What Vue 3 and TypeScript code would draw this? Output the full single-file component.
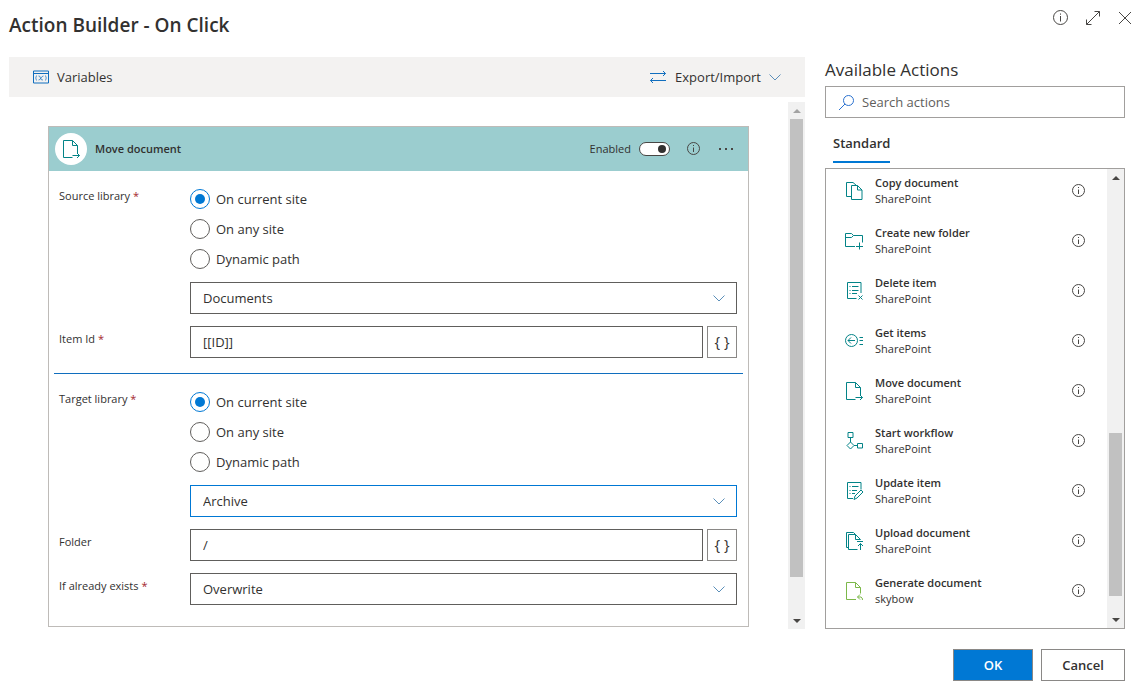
<script setup lang="ts">
import { ref } from 'vue'

interface Action {
  name: string
  source: string
  icon: string
  tone?: 'green'
}

const docPath = 'M11.5 18.5h-9v-17h9l5 5v7.5M11.5 1.5v5h5'
const listPath =
  'M12.5 17.5h-9v-16h13.5v10.5M8 5.5h6.5M8 9.5h6.5M8 12.5h5M5.5 5.5h1M5.5 9.5h1M5.5 12.5h1'

const actions: Action[] = [
  {
    name: 'Copy document',
    source: 'SharePoint',
    icon: 'M7 15.5h-4.500v-14h6.500l3.500 3M7.500 4.500h6l4.500 4.500v9.500h-10.500zM13.500 4.500v4.500h4.500',
  },
  {
    name: 'Create new folder',
    source: 'SharePoint',
    icon: 'M11 15.5h-9.500v-13h6l2 2h9v7M1.500 6.500h6l2-2M15.500 11.500v7M12 15.500h7',
  },
  { name: 'Delete item', source: 'SharePoint', icon: listPath + 'M14.500 14.500l4 4M18.500 14.500l-4 4' },
  {
    name: 'Get items',
    source: 'SharePoint',
    icon: 'M13.500 9.500a6 6 0 1 1-12 0a6 6 0 1 1 12 0zM4 9.500h7M7 6.500l-3 3l3 3M15.500 6.500h3.500M15.500 9.500h3.500M15.500 13.500h3.500',
  },
  { name: 'Move document', source: 'SharePoint', icon: docPath + 'M11.500 16.500h7M16 14l2.500 2.500l-2.500 2.500' },
  {
    name: 'Start workflow',
    source: 'SharePoint',
    icon: 'M4 1.500h5v5h-5zM6.500 6.500v4.500M6.500 11l3.500 3.500l-3.500 3.500l-3.500-3.500zM10 14.500h3.500M13.500 12.500h5v4.500h-5z',
  },
  {
    name: 'Update item',
    source: 'SharePoint',
    icon: 'M9 17.500h-5.500v-16h13.500v7M8 5.500h6.500M8 9.500h5M8 12.500h3M5.500 5.500h1M5.500 9.500h1M5.500 12.500h1M10 18.500l1-3.500l6-6l2 2l-6 6z',
  },
  {
    name: 'Upload document',
    source: 'SharePoint',
    icon: 'M4.500 16.500h-2v-15h7l2 2M13.500 18.500h-9v-15h7l5 5M11.500 3.500v5h5M13 10.500h6M16.500 19v-6.500M14 15l2.500-2.500l2.500 2.500',
  },
  {
    name: 'Generate document',
    source: 'skybow',
    icon: 'M12 18.500h-9.500v-17h9l5 5v6M11.500 1.500v5h5M16 13.500l-2.500 2.500l2.500 2.500M13.500 16h3.500q1.500 .500 1.500 3',
    tone: 'green',
  },
]

const locations = ['On current site', 'On any site', 'Dynamic path']
const sourceLocation = ref(locations[0])
const targetLocation = ref(locations[0])
const sourceLibrary = ref('Documents')
const targetLibrary = ref('Archive')
const itemId = ref('[[ID]]')
const folder = ref('/')
const ifExists = ref('Overwrite')
const enabled = ref(true)
const search = ref('')
</script>

<template>
  <main class="dialog">
    <header class="title-bar">
      <h1>Action Builder - On Click</h1>
      <div class="window-buttons">
        <button type="button" aria-label="Information">
          <svg width="16" height="16" viewBox="0 0 16 16"><circle cx="7.500" cy="7.500" r="7" /><path d="M7.500 6v5.500M7.500 3.500v1.200" /></svg>
        </button>
        <button type="button" aria-label="Expand">
          <svg width="16" height="16" viewBox="0 0 16 16"><path d="M1.500 14.500l13-13M9.500 1.500h5v5M1.500 9.500v5h5" /></svg>
        </button>
        <button type="button" aria-label="Close">
          <svg width="16" height="16" viewBox="0 0 16 16"><path d="M2 2l12 12M14 2l-12 12" /></svg>
        </button>
      </div>
    </header>

    <div class="columns">
      <section class="builder">
        <div class="command-bar">
          <button type="button">
            <svg class="blue" width="16" height="14" viewBox="0 0 16 14">
              <path d="M.5 1h15v12h-15zM.5 3.500h15" />
              <path class="fine" d="M3.500 5.500q-1.500 2.500 0 5M12.500 5.500q1.500 2.500 0 5M5.500 6q1.500-.5 2 2t2.500 2M10.500 6q-1.500 0-2.500 2t-2.500 2" />
            </svg>
            Variables
          </button>
          <button type="button">
            <svg class="blue" width="17" height="12" viewBox="0 0 17 12"><path d="M0 2.500h15.500M13 0l2.500 2.500l-2.500 2.500M16 9.500h-15.500M3 7l-2.500 2.500l2.500 2.500" /></svg>
            Export/Import
            <svg class="chevron" width="12" height="7" viewBox="0 0 12 7"><path d="M.5 .5l5.500 5.500l5.500-5.500" /></svg>
          </button>
        </div>

        <div class="canvas">
          <form class="card" @submit.prevent>
            <div class="card-header">
              <span class="badge">
                <svg class="teal" width="20" height="20" viewBox="0 0 20 20"><path :d="actions[4].icon" /></svg>
              </span>
              <h2>Move document</h2>
              <label class="enabled">Enabled <input v-model="enabled" type="checkbox" role="switch" /></label>
              <button type="button" class="plain info" aria-label="About this action">
                <svg width="14" height="14" viewBox="0 0 14 14"><circle cx="6.500" cy="6.500" r="6" /><path d="M6.500 5.500v4.500M6.500 3v1" /></svg>
              </button>
              <button type="button" class="plain more" aria-label="More options">
                <svg width="16" height="4" viewBox="0 0 16 4"><path class="dots" d="M1 1h2v2h-2zM7 1h2v2h-2zM13 1h2v2h-2z" /></svg>
              </button>
            </div>

            <div class="group">
              <div class="row">
                <span id="source-label" class="label first">Source library <i>*</i></span>
                <div class="control">
                  <div class="radios" role="radiogroup" aria-labelledby="source-label">
                    <label v-for="item in locations" :key="item">
                      <input v-model="sourceLocation" type="radio" name="source" :value="item" />{{ item }}
                    </label>
                  </div>
                  <div class="select">
                    <select v-model="sourceLibrary" aria-labelledby="source-label"><option>Documents</option></select>
                    <svg class="chevron" width="12" height="7" viewBox="0 0 12 7"><path d="M.5 .5l5.500 5.500l5.500-5.500" /></svg>
                  </div>
                </div>
              </div>
              <div class="row">
                <label class="label" for="item-id">Item Id <i>*</i></label>
                <div class="control with-button">
                  <input id="item-id" v-model="itemId" type="text" />
                  <button type="button" class="braces" aria-label="Insert expression for Item Id">{ }</button>
                </div>
              </div>
            </div>
            <hr />
            <div class="group">
              <div class="row">
                <span id="target-label" class="label first">Target library <i>*</i></span>
                <div class="control">
                  <div class="radios" role="radiogroup" aria-labelledby="target-label">
                    <label v-for="item in locations" :key="item">
                      <input v-model="targetLocation" type="radio" name="target" :value="item" />{{ item }}
                    </label>
                  </div>
                  <div class="select active">
                    <select v-model="targetLibrary" aria-labelledby="target-label"><option>Archive</option></select>
                    <svg class="chevron" width="12" height="7" viewBox="0 0 12 7"><path d="M.5 .5l5.500 5.500l5.500-5.500" /></svg>
                  </div>
                </div>
              </div>
              <div class="row">
                <label class="label" for="folder">Folder</label>
                <div class="control with-button">
                  <input id="folder" v-model="folder" type="text" />
                  <button type="button" class="braces" aria-label="Insert expression for Folder">{ }</button>
                </div>
              </div>
              <div class="row">
                <label class="label" for="exists">If already exists <i>*</i></label>
                <div class="control">
                  <div class="select">
                    <select id="exists" v-model="ifExists"><option>Overwrite</option></select>
                    <svg class="chevron" width="12" height="7" viewBox="0 0 12 7"><path d="M.5 .5l5.500 5.500l5.500-5.500" /></svg>
                  </div>
                </div>
              </div>
            </div>
          </form>
          <div class="scrollbar form-scroll" aria-hidden="true">
            <span class="arrow up muted"></span>
            <div class="track"><span class="before"></span><span class="thumb"></span><span class="after"></span></div>
            <span class="arrow down"></span>
          </div>
        </div>
      </section>

      <aside class="library">
        <h2>Available Actions</h2>
        <label class="search">
          <svg width="17" height="17" viewBox="0 0 17 17"><circle cx="10.500" cy="6.500" r="5" /><path d="M7 10l-6 6" /></svg>
          <input v-model="search" type="search" placeholder="Search actions" aria-label="Search actions" />
        </label>
        <div class="tabs" role="tablist">
          <button type="button" role="tab" aria-selected="true">Standard</button>
        </div>
        <div class="list-box">
          <ul>
            <li v-for="action in actions" :key="action.name">
              <svg :class="action.tone ?? 'teal'" width="20" height="20" viewBox="0 0 20 20"><path :d="action.icon" /></svg>
              <div class="text"><strong>{{ action.name }}</strong><span>{{ action.source }}</span></div>
              <button type="button" class="plain" :aria-label="'About ' + action.name">
                <svg width="14" height="14" viewBox="0 0 14 14"><circle cx="6.500" cy="6.500" r="6" /><path d="M6.500 5.500v4.500M6.500 3v1" /></svg>
              </button>
            </li>
          </ul>
          <div class="scrollbar list-scroll" aria-hidden="true">
            <span class="arrow up"></span>
            <div class="track"><span class="before"></span><span class="thumb"></span><span class="after"></span></div>
            <span class="arrow down"></span>
          </div>
        </div>
      </aside>
    </div>

    <footer>
      <button type="button" class="primary">OK</button>
      <button type="button">Cancel</button>
    </footer>
  </main>
</template>

<style>
body {
  margin: 0;
  background: #fff;
}
</style>

<style scoped>
* {
  box-sizing: border-box;
}
.dialog {
  display: flex;
  flex-direction: column;
  min-height: 100vh;
  padding: 0 15px 9px 9px;
  font: 13px/20px "Segoe UI", "Open Sans", sans-serif;
  color: #323130;
}
button,
input,
select {
  font: inherit;
  color: inherit;
}
button {
  padding: 0;
  border: 0;
  background: none;
}
h1,
h2,
ul {
  margin: 0;
  padding: 0;
}
svg {
  display: block;
  flex: none;
  fill: none;
  stroke: #484644;
}
.title-bar {
  display: flex;
  justify-content: space-between;
  height: 57px;
}
h1 {
  padding-top: 11px;
  font-size: 19px;
  font-weight: 600;
  line-height: 28px;
}
.window-buttons {
  display: flex;
  gap: 16px;
  height: 16px;
  margin: 10px -8px 0 0;
}
.columns {
  display: grid;
  grid-template-columns: minmax(0, 1fr) 300px;
  gap: 20px;
  flex: 1;
}
.builder {
  display: flex;
  flex-direction: column;
  gap: 5px;
}
.command-bar {
  display: flex;
  justify-content: space-between;
  height: 40px;
  padding: 0 24px;
  background: #f3f2f1;
}
.command-bar button {
  display: flex;
  align-items: center;
  gap: 8px;
}
.blue {
  stroke: #106ebe;
}
.fine {
  stroke-width: 0.7;
}
.chevron {
  stroke: #5b8fb9;
}
.canvas {
  display: flex;
  flex: 1;
}
.card {
  flex: 1;
  min-width: 0;
  margin: 24px 39px 2px;
  border: 1px solid #bebbb8;
}
.card-header {
  display: flex;
  align-items: center;
  height: 44px;
  padding: 0 14px 0 6px;
  background: #9bcdcf;
  font-size: 11px;
}
.badge {
  display: grid;
  place-items: center;
  width: 32px;
  height: 32px;
  margin-right: 8px;
  border-radius: 50%;
  background: #fff;
}
.teal {
  stroke: #038387;
}
.green {
  stroke: #7cb84a;
}
.card-header h2 {
  flex: 1;
  font-size: 11px;
  font-weight: 600;
}
.enabled {
  display: flex;
  align-items: center;
  gap: 8px;
}
.enabled input {
  appearance: none;
  display: flex;
  align-items: center;
  justify-content: flex-end;
  width: 31px;
  height: 14px;
  margin: 0;
  padding: 0 3px;
  border: 1px solid #484644;
  border-radius: 7px;
  background: #fff;
}
.enabled input:not(:checked) {
  justify-content: flex-start;
}
.enabled input::before {
  content: "";
  width: 8px;
  height: 8px;
  border-radius: 50%;
  background: #323130;
}
.info {
  margin: 0 17px;
}
.dots {
  fill: #484644;
  stroke: none;
}
.group {
  display: flex;
  flex-direction: column;
  gap: 12px;
  padding: 18px 11px 15px 10px;
}
hr {
  height: 1px;
  margin: 0 5px;
  border: 0;
  background: #106ebe;
}
.row {
  display: grid;
  grid-template-columns: 131px minmax(0, 1fr);
}
.label {
  padding-top: 6px;
  font-size: 11px;
  line-height: 14px;
}
.label.first {
  padding-top: 0;
}
.radios + .select {
  margin-top: 13px;
}
.label i {
  color: #a4262c;
  font-style: normal;
}
.radios {
  display: flex;
  flex-direction: column;
  gap: 10px;
}
.radios label {
  display: flex;
  align-items: center;
  gap: 6px;
}
.radios input {
  appearance: none;
  display: grid;
  place-items: center;
  width: 20px;
  height: 20px;
  margin: 0;
  border: 1px solid #605e5c;
  border-radius: 50%;
}
.radios input:checked {
  border-color: #0078d4;
}
.radios input:checked::before {
  content: "";
  width: 10px;
  height: 10px;
  border-radius: 50%;
  background: #0078d4;
}
.select {
  display: grid;
  grid-template-columns: minmax(0, 1fr);
  align-items: center;
}
.select > * {
  grid-area: 1 / 1;
}
.select svg {
  justify-self: end;
  margin-right: 12px;
  pointer-events: none;
}
select,
.control input[type="text"] {
  appearance: none;
  width: 100%;
  height: 32px;
  padding: 0 12px;
  border: 1px solid #605e5c;
  border-radius: 0;
  background: #fff;
}
.active select {
  border-color: #0078d4;
}
.with-button {
  display: flex;
  gap: 4px;
}
.braces {
  flex: none;
  width: 30px;
  height: 32px;
  padding-bottom: 2px;
  border: 1px solid #8a8886;
  font-size: 15px;
}
.scrollbar {
  display: flex;
  flex: none;
  flex-direction: column;
  width: 17px;
  background: #f1f1f1;
}
.arrow {
  display: grid;
  place-items: center;
  height: 17px;
}
.arrow::before {
  content: "";
  border: 4px solid transparent;
  border-top-width: 0;
  border-bottom: 4px solid #484644;
}
.arrow.down::before {
  border-top: 4px solid #484644;
  border-bottom-width: 0;
}
.arrow.muted::before {
  border-bottom-color: #a3a3a3;
}
.track {
  display: grid;
  flex: 1;
  padding: 0 2px;
}
.form-scroll .track {
  grid-template-rows: 0fr 458fr 35fr;
}
.list-scroll .track {
  grid-template-rows: 247fr 163fr 15fr;
}
.thumb {
  background: #c1c1c1;
}
.library {
  display: flex;
  flex-direction: column;
}
.library h2 {
  height: 29px;
  font-size: 17px;
  font-weight: 400;
  line-height: 26px;
}
.search {
  display: flex;
  align-items: center;
  gap: 7px;
  height: 32px;
  padding: 0 12px;
  border: 1px solid #a19f9d;
}
.search svg {
  stroke: #2b72d0;
}
.search input {
  appearance: none;
  flex: 1;
  min-width: 0;
  padding: 0;
  border: 0;
  outline: 0;
}
.search input::placeholder {
  color: #605e5c;
}
.tabs {
  height: 50px;
  padding: 4px 8px 0;
}
.tabs button {
  height: 41px;
  padding-top: 2px;
  border-bottom: 2px solid #0078d4;
  font-weight: 600;
}
.list-box {
  display: flex;
  flex: 1;
  border: 1px solid #a19f9d;
}
ul {
  display: flex;
  flex: 1;
  flex-direction: column;
  gap: 18px;
  padding: 6px 21px 20px 18px;
  list-style: none;
}
li {
  display: flex;
  align-items: center;
  gap: 11px;
  height: 32px;
}
.text {
  display: flex;
  flex: 1;
  flex-direction: column;
  font-size: 11px;
  line-height: 16px;
}
.text strong {
  font-weight: 600;
}
footer {
  display: flex;
  justify-content: flex-end;
  gap: 8px;
  padding-top: 20px;
}
footer button {
  width: 84px;
  height: 32px;
  border: 1px solid #8a8886;
  font-weight: 600;
}
footer .primary {
  width: 80px;
  background: #0078d4;
  color: #fff;
}
</style>
